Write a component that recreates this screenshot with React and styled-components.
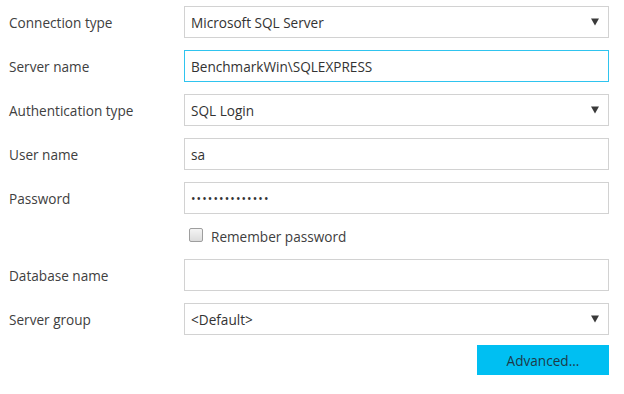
import React from "react";
import styled, { createGlobalStyle } from "styled-components";

const Global = createGlobalStyle`
  html, body { margin: 0; padding: 0; background: #ffffff; }
  body { font-family: "Open Sans", "Noto Sans", sans-serif; }
`;

const Form = styled.div`
  display: grid;
  grid-template-columns: 175px 425px;
  row-gap: 12px;
  padding: 6px 0 0 9px;
  width: 624px;
  box-sizing: border-box;
`;

const Label = styled.div`
  display: flex;
  align-items: center;
  height: 32px;
  font-size: 13.6px;
  color: #404040;
`;

const Field = styled.div`
  position: relative;
  display: flex;
  align-items: center;
  height: 32px;
  box-sizing: border-box;
  border: 1px solid ${(p) => (p.$focused ? "#2fc4ef" : "#d2d2d2")};
  background: #ffffff;
  padding: 0 6px;
  font-size: 13.6px;
  color: #333333;
`;

const Arrow = styled.span`
  position: absolute;
  right: 9px;
  top: 50%;
  transform: translateY(-50%);
  width: 0;
  height: 0;
  border-left: 4px solid transparent;
  border-right: 4px solid transparent;
  border-top: 7px solid #3a3a3a;
`;

const Dots = styled.span`
  font-size: 12px;
  letter-spacing: 1.1px;
  color: #333333;
`;

const CheckRow = styled.div`
  grid-column: 2;
  display: flex;
  align-items: center;
  gap: 8px;
  height: 21px;
  padding-left: 5px;
  font-size: 13.6px;
  color: #404040;
`;

const Check = styled.span`
  width: 14px;
  height: 14px;
  box-sizing: border-box;
  border: 1px solid #9e9e9e;
  border-radius: 2px;
  background: linear-gradient(#f4f4f4, #dcdcdc);
  margin-top: -4px;
`;

const ButtonRow = styled.div`
  grid-column: 2;
  display: flex;
  justify-content: flex-end;
  margin-top: -2px;
`;

const Button = styled.button`
  width: 132px;
  height: 30px;
  border: none;
  background: #00bff2;
  color: #1e3a48;
  font-family: "Open Sans", "Noto Sans", sans-serif;
  font-size: 13.6px;
  padding: 0;
`;

const Row = ({ label, children }) => (
  <>
    <Label>{label}</Label>
    {children}
  </>
);

export default function App() {
  return (
    <>
      <Global />
      <Form>
        <Row label="Connection type">
          <Field>
            Microsoft SQL Server
            <Arrow />
          </Field>
        </Row>
        <Row label="Server name">
          <Field $focused>BenchmarkWin\SQLEXPRESS</Field>
        </Row>
        <Row label="Authentication type">
          <Field>
            SQL Login
            <Arrow />
          </Field>
        </Row>
        <Row label="User name">
          <Field>sa</Field>
        </Row>
        <Row label="Password">
          <Field>
            <Dots>••••••••••••••</Dots>
          </Field>
        </Row>
        <CheckRow>
          <Check />
          Remember password
        </CheckRow>
        <Row label="Database name">
          <Field />
        </Row>
        <Row label="Server group">
          <Field>
            &lt;Default&gt;
            <Arrow />
          </Field>
        </Row>
        <ButtonRow>
          <Button>Advanced...</Button>
        </ButtonRow>
      </Form>
    </>
  );
}
